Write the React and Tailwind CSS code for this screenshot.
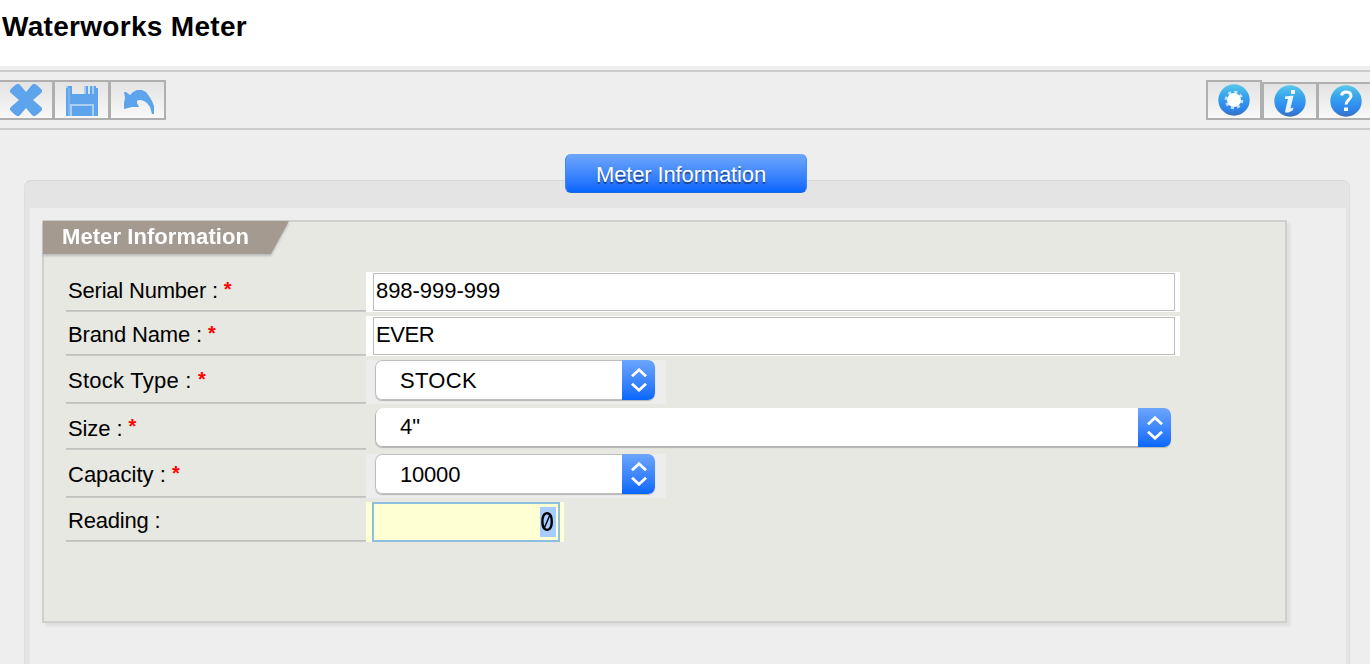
import React from "react";

const CloseIcon = () => (
  <svg className="block h-8 w-8" viewBox="0 0 32 32">
    <path
      d="M7 0h2l2 2 5 6 5-6 2-2h2l3 2 4 4v2l-2 2-7 6 7 6 2 2v2l-4 4-3 2h-2l-2-2-5-6-5 6-2 2H7l-3-2-4-4v-2l2-2 7-6-7-6-2-2V6l4-4z"
      fill="#5ea4ec"
    />
  </svg>
);

const SaveIcon = () => (
  <svg className="block h-8 w-8" viewBox="0 0 32 32" shapeRendering="crispEdges">
    <path d="M0 2h6v8h12V2h12v2h2v28H0z" fill="#5ea4ec" />
    <path d="M0 2h2v2H0zM18 2h2v8h-2zM26 2h2v8h-2z" fill="#a9cdf2" />
    <path d="M22 2h2v8h-2z" fill="#d5e5f5" />
    <path d="M4 20h24v12h-2V22H6v10H4z" fill="#a9cff4" />
    <path d="M2 4h2v28H2z" fill="#7bb4ee" />
  </svg>
);

const UndoIcon = () => (
  <svg className="block h-8 w-8" viewBox="0 0 32 32">
    <path
      d="M2 8h2l4 3 3-3 4-2h5l4 2 3 4 3 5 2 5v8h-2l-2-7-3-4-3-2-3-1h-2l-2 1v2l2 4-7 0-8 2v-6l1-5z"
      fill="#5ea4ec"
    />
  </svg>
);

const Disc = ({ id, children }) => (
  <svg className="block h-8 w-8" viewBox="0 0 32 32">
    <defs>
      <linearGradient id={id} x1="0" y1="0" x2="0" y2="1">
        <stop offset="0" stopColor="#5ac8ea" />
        <stop offset="0.3" stopColor="#3baaea" />
        <stop offset="0.6" stopColor="#3192f0" />
        <stop offset="0.85" stopColor="#2f7fe0" />
        <stop offset="1" stopColor="#3a6fb4" />
      </linearGradient>
    </defs>
    <circle cx="16" cy="16" r="15.7" fill={`url(#${id})`} />
    {children}
  </svg>
);

const GearIcon = () => (
  <Disc id="disc-gear">
    <circle cx="16" cy="16" r="7" fill="#fff" />
    <circle cx="16" cy="16" r="8" fill="none" stroke="#fff" strokeWidth="2.6" strokeDasharray="3.14 3.14" opacity="0.7" />
  </Disc>
);

const InfoIcon = () => (
  <Disc id="disc-info">
    <path d="M17 5h4v4h-4z" fill="#fff" opacity="0.9" />
    <path d="M11 11.5l8.500-1-3 13 3-1-1 3-4 2h-3.500l.5-3 2.500-10.500h-3z" fill="#fff" opacity="0.9" />
  </Disc>
);

const HelpIcon = () => (
  <Disc id="disc-help">
    <path d="M11.500 10.500c1-5 9.500-4.500 9.500 .5 0 3.500-5 4-5 8.500" fill="none" stroke="#fff" strokeWidth="3" />
    <path d="M14 22.500h4v3.500h-4z" fill="#fff" />
  </Disc>
);

const toolButton =
  "flex justify-center border-2 border-[#afafaf] bg-linear-to-b from-[#e3e3e3] to-[#f8f8f8]";

const Toolbar = () => (
  <div className="flex h-[60px] items-end justify-between border-y-2 border-[#cbcbcb] pb-2">
    <div className="flex">
      <button className={`${toolButton} -ml-0.5 h-10 w-[56px] items-start pt-0.5`}>
        <CloseIcon />
      </button>
      <button className={`${toolButton} h-10 w-[56px] items-start border-l pt-0.5`}>
        <SaveIcon />
      </button>
      <button className={`${toolButton} h-10 w-[56px] items-start border-l pt-0.5`}>
        <UndoIcon />
      </button>
    </div>
    <div className="flex items-end">
      <button className={`${toolButton} h-10 w-[56px] items-start pt-0.5`}>
        <GearIcon />
      </button>
      <button className={`${toolButton} h-[38px] w-[56px] items-start pt-px`}>
        <InfoIcon />
      </button>
      <button className={`${toolButton} -mr-1 h-[38px] w-[56px] items-start border-l pt-px`}>
        <HelpIcon />
      </button>
    </div>
  </div>
);

const Row = ({ label, required, height, tracking = "", children }) => (
  <div className={`flex ${height}`}>
    <div className="flex w-[300px] shrink-0 flex-col">
      <div className="flex flex-1 items-center pl-0.5 whitespace-pre">
        <span className={tracking}>{label} : </span>
        {required && <span className="-mt-1 text-[20px] font-bold text-[#ff0000]">*</span>}
      </div>
      <div className="h-px bg-[#c0c1bf]" />
      <div className="h-px bg-[#cacbc8]" />
    </div>
    {children}
  </div>
);

const TextField = ({ value, tracking = "" }) => (
  <div className="flex w-[814px] bg-white py-px pr-[5px] pl-[7px]">
    <div className={`flex flex-1 items-center border border-[#bdbdbd] pb-0.5 pl-[2px] ${tracking}`}>{value}</div>
  </div>
);

const Select = ({ value, wide, tracking = "" }) => (
  <div className={wide ? "w-[814px] pl-[9px]" : "w-[300px] bg-[#ededed] pl-[9px]"}>
    <div
      className={
        wide
          ? "flex h-[39px] w-[796px] overflow-hidden rounded-[7px] shadow-[0_1px_1px_#b5b5b5]"
          : "flex h-10 w-[280px] overflow-hidden rounded-[7px] shadow-[0_1px_1px_#b5b5b5]"
      }
    >
      <div
        className={
          wide
            ? "flex flex-1 items-center rounded-l-[7px] border-b border-l border-[#b3b3b3] bg-white pl-6"
            : "flex flex-1 items-center rounded-l-[7px] border border-r-0 border-[#bebebe] bg-white pt-0.5 pl-6"
        }
      >
        <span className={tracking}>{value}</span>
      </div>
      <div className="flex w-[33px] items-center justify-center rounded-r-[6px] bg-linear-to-b from-[#6ba5fc] to-[#0566fe]">
        <svg className="block h-6 w-4" viewBox="0 0 16 24" fill="none" stroke="#fff" strokeWidth="2.800">
          <path d="M1 8.200l7-6.400 7 6.400M1 15.800l7 6.400 7-6.400" />
        </svg>
      </div>
    </div>
  </div>
);

export default function App() {
  return (
    <div className="flex h-[664px] w-[1370px] flex-col overflow-hidden bg-[#eeeeee] font-['Liberation_Sans',Arial,sans-serif] text-[22px] leading-6 text-black">
      <h1 className="h-[66px] shrink-0 bg-white pt-[11px] pl-0.5 text-[28px] leading-8 font-bold tracking-[0.3px]">
        Waterworks Meter
      </h1>
      <div className="shrink-0 pt-1">
        <Toolbar />
      </div>

      <div className="mt-6 flex shrink-0 justify-center">
        <div className="z-10 -mb-[13px] ml-0.5 flex h-[39px] w-[242px] items-center rounded-[6px] border-x border-b border-x-[#3f87f6] border-b-[#1a66dd] bg-linear-to-b from-[#6ea6fb] to-[#0465fe] pt-1 pl-[30px] tracking-[-0.14px] whitespace-nowrap text-white [text-shadow:0_2px_1px_rgba(0,0,0,0.45)]">
          Meter Information
        </div>
      </div>

      <div className="mr-5 ml-6 flex flex-1 rounded-t-[7px] border border-b-0 border-[#d6d6d6] border-r-[#dedede] border-l-[#dedede] bg-[#e4e4e4] pt-[27px] pr-[3px] pl-[5px]">
        <div className="flex-1 bg-[#eeeeee] pt-3 pl-3">
          <section className="h-[403px] w-[1245px] border-2 border-[#cfd0ce] bg-[#e6e8e1] shadow-[3px_3px_3px_rgba(0,0,0,0.07)]">
            <div className="-mt-px -ml-px h-[34px] w-[248px] drop-shadow-[0_2px_1px_rgba(90,90,100,0.3)]">
              <h2 className="h-[33px] w-[246px] bg-[#a59a90] pt-[4px] pl-[19px] font-bold tracking-[0.07px] whitespace-nowrap text-white [clip-path:polygon(0_0,100%_0,228px_100%,0_100%)]">
                Meter Information
              </h2>
            </div>
            <div className="flex flex-col gap-1 pt-[17px] pl-[22px]">
              <Row label="Serial Number" required height="h-10" tracking="tracking-[-0.2px]">
                <TextField value="898-999-999" tracking="tracking-[-0.05px]" />
              </Row>
              <Row label="Brand Name" required height="h-10" tracking="tracking-[-0.14px]">
                <TextField value="EVER" tracking="tracking-[-0.4px]" />
              </Row>
              <Row label="Stock Type" required height="h-11" tracking="tracking-[0.25px]">
                <Select value="STOCK" tracking="tracking-[0.3px]" />
              </Row>
              <Row label="Size" required height="h-[42px]" tracking="tracking-[-0.1px] pt-px">
                <Select value={'4"'} wide />
              </Row>
              <Row label="Capacity" required height="h-11">
                <Select value="10000" tracking="tracking-[-0.2px]" />
              </Row>
              <Row label="Reading" height="h-10" tracking="tracking-[-0.2px]">
                <div className="flex w-[198px] bg-[#feffd2] pr-1 pl-1.5">
                  <div className="flex flex-1 items-center justify-end border-2 border-[#8fbfdf] pr-[2px]">
                    <span className="flex h-[30px] w-4 items-center justify-center bg-[#a6cdff] font-[Inter,'DejaVu_Sans_Mono',monospace] text-[25px] font-medium slashed-zero">
                      <span className="block scale-x-[0.88] pr-0.5">0</span>
                    </span>
                  </div>
                </div>
              </Row>
            </div>
          </section>
        </div>
      </div>
    </div>
  );
}
